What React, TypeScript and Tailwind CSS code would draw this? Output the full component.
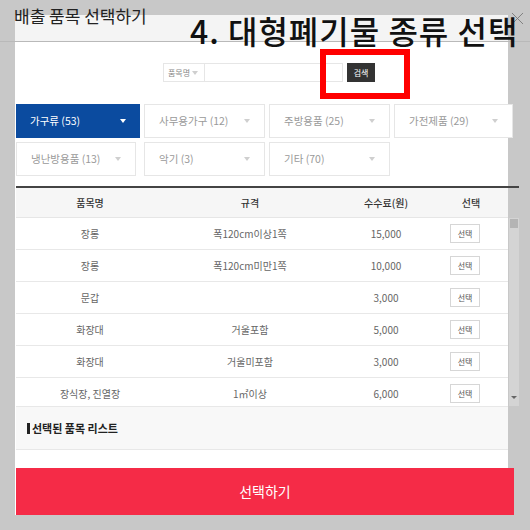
import { X } from "lucide-react";

type Tab = { label: string; w: string; active?: boolean };

const tabRows: Tab[][] = [
  [
    { label: "가구류 (53)", w: "w-[124px]", active: true },
    { label: "사무용가구 (12)", w: "w-[121px]" },
    { label: "주방용품 (25)", w: "w-[121px]" },
    { label: "가전제품 (29)", w: "w-[119px]" },
  ],
  [
    { label: "냉난방용품 (13)", w: "w-[120px] mr-[4px]" },
    { label: "악기 (3)", w: "w-[121px]" },
    { label: "기타 (70)", w: "w-[121px]" },
  ],
];

const rows = [
  ["장롱", "폭120cm이상1쪽", "15,000"],
  ["장롱", "폭120cm미만1쪽", "10,000"],
  ["문갑", "", "3,000"],
  ["화장대", "거울포함", "5,000"],
  ["화장대", "거울미포함", "3,000"],
  ["장식장, 진열장", "1㎡이상", "6,000"],
];

const Caret = ({ light }: { light?: boolean }) => (
  <span
    className={`block w-0 h-0 border-l-[3px] border-r-[3px] border-t-[4px] border-l-transparent border-r-transparent ${
      light ? "border-t-white" : "border-t-[#cfcfcf]"
    }`}
  />
);

const App = () => {
  return (
    <div className="w-[530px] h-[530px] bg-[#c8c8c8] relative overflow-hidden font-['Noto_Sans_CJK_KR','Noto_Sans',sans-serif]">
      {/* modal title bar */}
      <div className="h-[42px] pt-[15px] pl-[15px] border-b border-[#b9b9b9] relative">
        <div className="w-[493px] h-[26px] bg-[#f4f4f4]" />
        <span className="absolute left-[14px] top-[3px] text-[17px] text-[#222]">
          배출 품목 선택하기
        </span>
        <X className="absolute left-[507px] top-[8px] w-[21px] h-[21px] text-[#777]" strokeWidth={1} />
      </div>

      {/* modal body */}
      <div className="pl-[15px]">
        <div className="w-[493px] h-[473px] bg-white flex flex-col items-start pl-[1px]">
          {/* search */}
          <div className="mt-[21px] h-[19px] flex pl-[147px]">
            <div className="w-[42px] h-full border border-[#e6e6e6] flex items-center justify-between pl-[4px] pr-[6px] text-[8px] text-[#888]">
              품목명
              <Caret />
            </div>
            <div className="w-[138px] h-full border border-l-0 border-[#e6e6e6]" />
            <button className="ml-[4px] w-[28px] h-full bg-[#333] text-white text-[8px] leading-none">검색</button>
          </div>

          {/* category tabs */}
          <div className="mt-[22px] flex flex-col gap-[4px]">
            {tabRows.map((row, r) => (
              <div key={r} className="flex gap-[4px]">
                {row.map((t) => (
                  <div
                    key={t.label}
                    className={`${t.w} shrink-0 h-[34px] flex items-center justify-between pl-[14px] pr-[14px] text-[10.5px] ${
                      t.active ? "bg-[#0b4b9f] text-white" : "bg-white border border-[#e6e6e6] text-[#9a9a9a]"
                    }`}
                  >
                    {t.label}
                    <Caret light={t.active} />
                  </div>
                ))}
              </div>
            ))}
          </div>

          {/* item table */}
          <div className="mt-[10px] w-[503px] shrink-0 border-t-2 border-[#444]">
            <div className="h-[30px] w-[492px] bg-[#f6f6f6] border-b border-[#e6e6e6] grid grid-cols-[148px_172px_100px_70px] items-center text-center text-[10px] text-[#333] font-medium">
              <span>품목명</span>
              <span>규격</span>
              <span>수수료(원)</span>
              <span>선택</span>
            </div>
            <div className="flex">
              <div className="w-[492px] shrink-0 h-[188px] overflow-hidden">
                {rows.map((r, i) => (
                  <div
                    key={i}
                    className="h-[32px] border-b border-[#e8e8e8] grid grid-cols-[148px_172px_100px_58px] items-center text-center text-[10px] text-[#666]"
                  >
                    <span>{r[0]}</span>
                    <span>{r[1]}</span>
                    <span>{r[2]}</span>
                    <span className="flex justify-center">
                      <span className="w-[30px] h-[19px] border border-[#d6d6d6] bg-white flex items-center justify-center text-[8px] text-[#555]">
                        선택
                      </span>
                    </span>
                  </div>
                ))}
              </div>
              <div className="w-[10px] shrink-0 h-[188px] ml-[1px] bg-[#d4d4d4] flex flex-col justify-between items-center py-[1px]">
                <span className="w-[8px] h-[9px] bg-[#b4b4b4]" />
                <span className="mb-[6px] block w-0 h-0 border-l-[3px] border-r-[3px] border-t-[3px] border-l-transparent border-r-transparent border-t-[#666]" />
              </div>
            </div>
          </div>

          {/* selected list */}
          <div className="h-[44px] w-[492px] shrink-0 bg-[#f8f8f8] border-y border-[#e8e8e8] flex items-center pl-[11px] text-[11px] font-bold text-[#222]">
            <span className="w-[3px] h-[11px] bg-[#222] mr-[2px]" />
            선택된 품목 리스트
          </div>

          <button className="mt-[18px] w-[498px] shrink-0 h-[47px] bg-[#f52b47] text-white text-[14px]">선택하기</button>
        </div>
      </div>

      {/* tutorial annotations */}
      <div className="absolute left-[190px] top-[5px] text-[32px] font-medium text-[#111] tracking-[1px] leading-[50px] whitespace-nowrap">
        4. 대형폐기물 종류 선택
      </div>
      <div className="absolute left-[320px] top-[49px] w-[90px] h-[50px] border-[6px] border-[#ff0000]" />
    </div>
  );
};

export default App;
